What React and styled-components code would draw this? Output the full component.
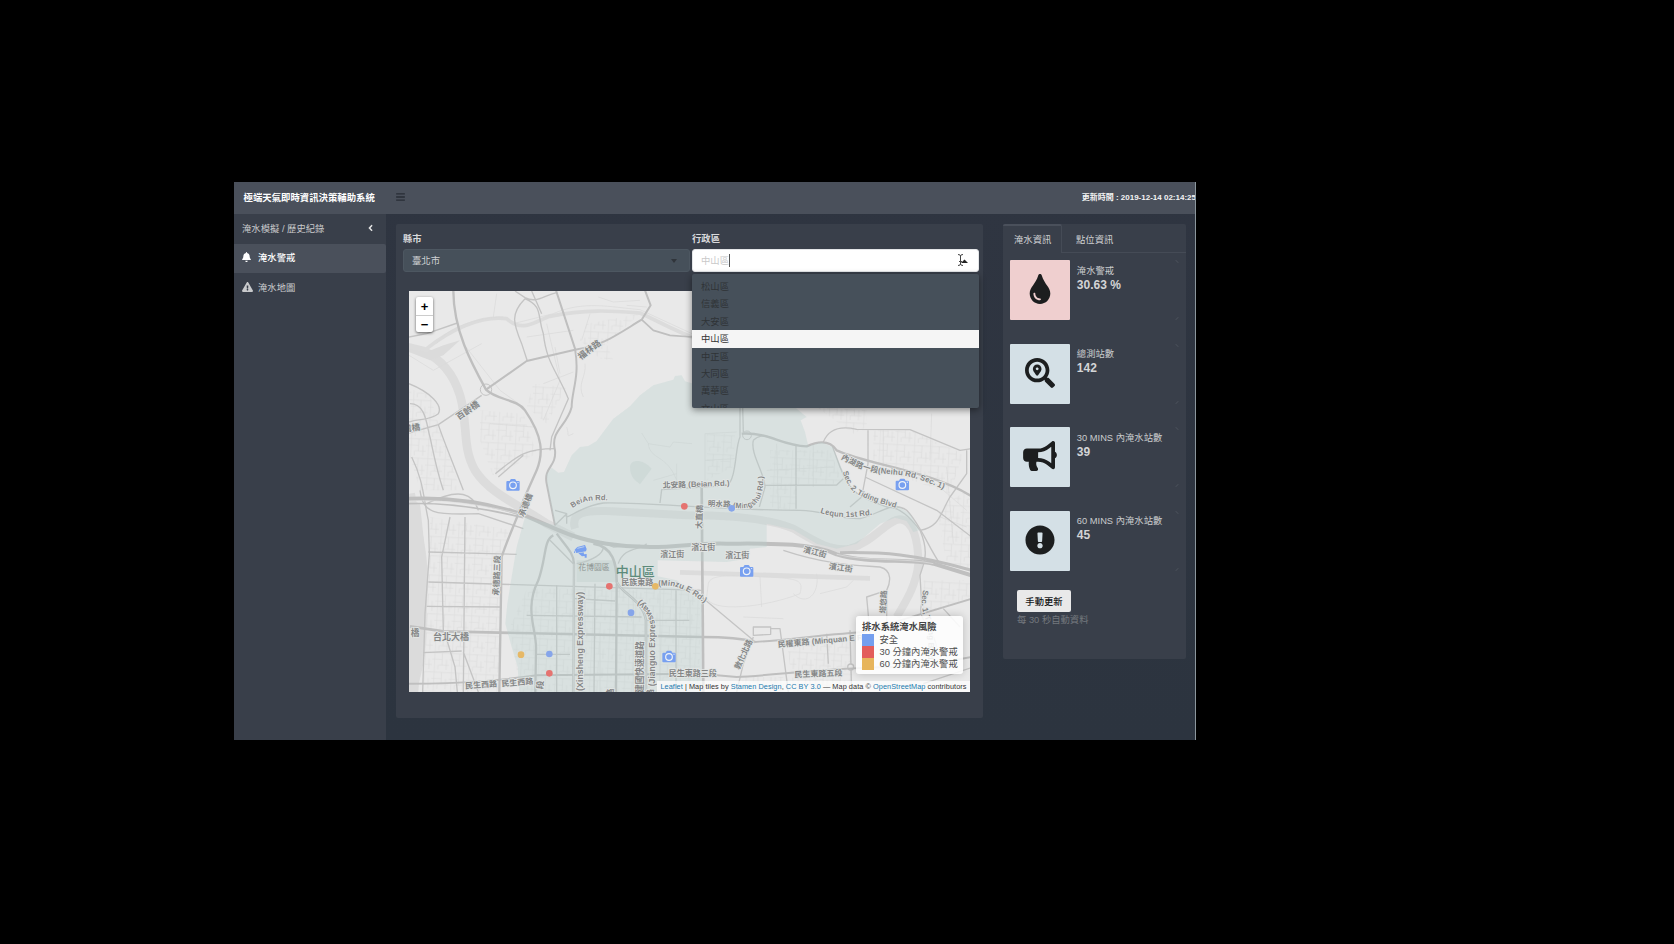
import React from "react";
import styled, { createGlobalStyle, css } from "styled-components";
import {
  FaBars, FaBell, FaExclamationTriangle, FaAngleLeft, FaTint,
  FaSearchLocation, FaBullhorn, FaExclamationCircle,
} from "react-icons/fa";

const GlobalStyle = createGlobalStyle`
  * { box-sizing: border-box; }
  body {
    margin: 0;
    background: #000;
    font-family: "Liberation Sans", "Noto Sans CJK TC", sans-serif;
    font-size: 9.33px;
    color: #d0d2d4;
  }
`;

const Screen = styled.div`
  width: 1674px;
  height: 944px;
  padding: 182px 0 0 234px;
  background: #000;
  overflow: hidden;
`;
const Window = styled.div`
  width: 962px;
  height: 558px;
  display: flex;
  flex-direction: column;
  background: linear-gradient(#2f3541, #2c343f);
  border-right: 1px solid #8b969c;
  overflow: hidden;
`;
const Header = styled.header`
  height: 32px;
  flex: none;
  display: flex;
  align-items: center;
  padding: 0 0 3px 9.5px;
  background: #4a505b;
  white-space: nowrap;
`;
const Brand = styled.div`
  width: 152.5px;
  font-size: 9.4px;
  font-weight: 700;
  color: #fff;
`;
const MenuIcon = styled(FaBars)`
  width: 9px;
  height: 10px;
  color: #282d36;
`;
const Updated = styled.div`
  margin: 0 -1px 0 auto;
  font-size: 8px;
  font-weight: 700;
  color: #f3f3f3;
`;
const Body = styled.div`
  flex: 1;
  display: flex;
  min-height: 0;
`;
const Sidebar = styled.nav`
  width: 152px;
  background: #393f4a;
`;
const NavItem = styled.div`
  height: 29.5px;
  display: flex;
  align-items: center;
  padding: 0 11px 2px 8px;
  color: ${(p) => (p.$active ? "#fff" : "#c9cacc")};
  background: ${(p) => (p.$active ? "#4a505b" : "transparent")};
  font-weight: ${(p) => (p.$active ? 500 : 400)};
  border-radius: 0 2px 2px 0;
  svg { width: ${(p) => p.$icon || 9}px; height: 10px; }
`;
const NavIcon = styled.span`
  width: 16px;
  display: flex;
`;
const Chevron = styled(FaAngleLeft)`
  margin-left: auto;
  color: #e4e4e4;
`;
const Content = styled.main`
  flex: 1;
  display: flex;
  align-items: flex-start;
  gap: 20px;
  padding: 10px 9px 0 10px;
`;
const MapCard = styled.section`
  width: 587px;
  height: 494px;
  padding: 8px 4px 0 7px;
  background: #393f4a;
  border-radius: 2px;
`;
const Filters = styled.div`
  display: flex;
  gap: 2px;
`;
const Field = styled.div`
  position: relative;
  width: 287px;
`;
const Label = styled.label`
  display: block;
  height: 17px;
  line-height: 15px;
  font-weight: 700;
  color: #d9dadc;
`;
const Select = styled.div`
  height: 23px;
  display: flex;
  align-items: center;
  padding: 0 0 1px 8px;
  border-radius: 3px;
  ${(p) => p.$open
    ? css`background: #fff; color: #c9c9c9; border: 1px solid #e4e6e8;`
    : css`background: #46505a; color: #cfd1d3; border: 1px solid #4d5761;`}
`;
const Caret = styled.span`
  margin: 1px 12px 0 auto;
  border: 3px solid transparent;
  border-top: 4px solid #30353b;
  border-bottom: 0;
`;
const TextCaret = styled.span`
  width: 1px;
  height: 13px;
  background: #555;
`;
const PointerIcon = styled.svg`
  width: 12px;
  height: 14px;
  margin: 0 10px 1px auto;
`;
const Menu = styled.div`
  position: absolute;
  z-index: 5;
  top: 42px;
  left: 0;
  width: 287px;
  height: 134px;
  padding-top: 4px;
  background: #46505a;
  border-radius: 2px;
  box-shadow: 0 2px 7px rgba(0, 0, 0, .45);
  overflow: hidden;
`;
const Option = styled.div`
  height: 17.4px;
  line-height: 18px;
  padding-left: 9px;
  color: ${(p) => (p.$active ? "#333" : "#2f3336")};
  background: ${(p) => (p.$active ? "#f5f5f5" : "transparent")};
`;

const MapBox = styled.div`
  position: relative;
  width: 561px;
  height: 401px;
  margin: 19px 0 0 6px;
  overflow: hidden;
  background: #e9e9e9;
`;
const MapSvg = styled.svg`
  display: block;
  width: 100%;
  height: 100%;
`;
const ZoomControl = styled.div`
  position: absolute;
  left: 7px;
  top: 6px;
  width: 17px;
  height: 35px;
  background: #fff;
  border-radius: 2px;
  box-shadow: 0 1px 3px rgba(0, 0, 0, .6);
`;
const ZoomButton = styled.div`
  height: 17.5px;
  display: flex;
  align-items: center;
  justify-content: center;
  padding-top: 1px;
  font-size: 13px;
  font-weight: 700;
  color: #000;
  & + & { border-top: 1px solid #ccc; }
`;
const Legend = styled.div`
  position: absolute;
  right: 7px;
  top: 325px;
  width: 107px;
  height: 58px;
  padding: 5px 0 0 6px;
  color: #4e4e4e;
  background: rgba(255, 255, 255, .86);
  border-radius: 3px;
  box-shadow: 0 0 8px rgba(0, 0, 0, .2);
  white-space: nowrap;
`;
const LegendTitle = styled.div`
  height: 13.3px;
  line-height: 13px;
  font-weight: 700;
  color: #444;
`;
const LegendRow = styled.div`
  height: 12px;
  display: flex;
  align-items: center;
  gap: 5.5px;
  line-height: 11px;
  &::before {
    content: "";
    width: 12px;
    height: 12px;
    background: ${(p) => p.$color};
  }
`;
const Attribution = styled.div`
  position: absolute;
  right: 0;
  bottom: 0;
  height: 11px;
  padding: 0 3.5px;
  line-height: 11px;
  font-size: 7.33px;
  letter-spacing: .055px;
  color: #333;
  background: rgba(255, 255, 255, .7);
  white-space: nowrap;
`;
const Link = styled.span`
  color: #1a79ae;
`;

const InfoPanel = styled.aside`
  width: 183px;
  height: 435px;
  background: #393f4a;
  border-radius: 2px;
`;
const Tabs = styled.div`
  height: 29px;
  display: flex;
`;
const Tab = styled.div`
  height: 29px;
  padding-left: ${(p) => (p.$active ? 11 : 14)}px;
  line-height: ${(p) => (p.$active ? 28 : 32)}px;
  color: #d0d1d3;
  ${(p) => p.$active
    ? css`width: 59px; border-top: 2px solid #4a505b; border-right: 1px solid #454b56; border-radius: 2px 2px 0 0;`
    : css`flex: 1; border-bottom: 1px solid #454b56;`}
`;
const Stats = styled.div`
  display: flex;
  flex-direction: column;
  gap: 23.3px;
  padding: 7px 6px 0 7px;
`;
const Stat = styled.div`
  position: relative;
  height: 60.3px;
  display: flex;
  gap: 6.5px;
  &::before, &::after {
    content: "";
    position: absolute;
    right: 1px;
    width: 4px;
    height: 1px;
    background: #484e58;
  }
  &::before { top: 1px; transform: rotate(45deg); }
  &::after { bottom: 1px; transform: rotate(-45deg); }
`;
const StatIcon = styled.div`
  width: 60.3px;
  display: flex;
  align-items: center;
  justify-content: center;
  padding-bottom: 2px;
  background: ${(p) => p.$color};
  color: #1c1e1f;
  border-radius: 1px;
  svg { width: ${(p) => p.$size || 30}px; height: 30px; }
`;
const StatText = styled.div`
  padding-top: 3.7px;
  white-space: nowrap;
`;
const StatLabel = styled.div`
  height: 14px;
  line-height: 14px;
  color: #c9cbcd;
`;
const StatValue = styled.div`
  height: 16px;
  line-height: 15px;
  font-size: 12px;
  font-weight: 700;
  color: #d3d4d6;
`;
const Refresh = styled.button`
  display: block;
  width: 54px;
  height: 21.5px;
  margin: 19px 0 0 14px;
  padding: 0;
  border: 0;
  border-radius: 2px;
  background: #e9e9e9;
  color: #16181a;
  font: 500 9.33px "Liberation Sans", "Noto Sans CJK TC", sans-serif;
`;
const Hint = styled.div`
  margin-left: 14px;
  line-height: 17px;
  color: #74787e;
`;

const riverPaths = [
  ["M20 200 L70 212 C120 235 160 280 180 345 C205 430 185 500 225 570 C270 640 350 670 440 730 L520 770", 26],
  ["M28 640 C45 740 75 840 65 950 C60 1050 70 1120 30 1235", 34],
  ["M80 205 C150 150 240 105 320 115 C370 160 410 120 450 108 C560 85 640 92 720 98 C780 125 820 150 900 180", 11],
  ["M525 745 C510 695 560 690 620 692 L860 705 C1000 705 1110 715 1180 745 C1240 780 1290 815 1350 805 C1420 785 1460 720 1500 717 C1540 720 1555 780 1555 850 C1550 910 1520 960 1490 1010", 24],
  ["M840 876 L1410 894", 14],
];
const majorPaths = [
  ["M160 30 C160 150 215 250 258 328 C290 360 350 355 375 390 C430 470 430 520 410 570 L370 660 C350 720 320 780 305 830 L298 1235", 7],
  ["M27 655 C150 650 270 670 360 700 C450 735 510 775 620 790 C780 815 870 785 980 790 C1100 790 1230 785 1310 822 C1400 850 1520 835 1600 850 L1715 885", 12],
  ["M27 670 C160 665 280 690 370 712", 5],
  ["M580 790 C640 800 650 850 650 905 C665 940 730 960 738 1020 L738 1235", 8],
  ["M470 760 C500 800 522 820 522 850 L520 1235", 7],
  ["M460 765 C430 780 440 830 415 900 C370 990 412 1050 408 1110 L406 1235", 7],
  ["M650 910 L648 1235", 7],
  ["M905 620 L910 1235", 8],
  ["M468 30 L525 205 C540 290 515 330 515 380 C500 440 450 450 465 510 C470 560 430 560 440 610 L465 735", 6],
  ["M258 328 L380 242 L525 208 C610 195 640 170 725 118 L752 75 L735 30", 6],
  ["M725 118 L760 150 L810 165 L876 170", 5],
  ["M30 1038 L130 1053 L905 1070 C980 1070 1030 1075 1065 1085", 8],
  ["M1025 460 C1110 455 1140 495 1220 498 C1260 480 1290 480 1310 510 C1410 555 1590 570 1715 648", 7],
  ["M1065 1085 C1150 1080 1250 1065 1390 1055 L1500 1020 L1715 955", 6],
  ["M27 1210 C200 1210 300 1200 410 1185 L900 1180 L1010 1190 C1130 1185 1350 1155 1550 1160 L1715 1130", 6],
  ["M1320 817 C1450 815 1540 820 1715 870", 9],
];
const mediumPaths = [
  "M27 170 L80 160 L172 128 M345 32 L375 52 C410 70 430 45 470 37 M375 55 C430 80 410 100 430 160 C440 250 470 270 505 355 L455 470 L450 510 M375 55 C330 100 340 130 365 190 L382 242 M395 32 L425 100",
  "M27 458 L115 433 L245 345 M30 370 C80 370 80 440 90 470 C105 540 110 570 130 630 M27 310 C90 335 130 375 115 400 C90 420 60 415 27 425 M115 433 C130 480 160 550 190 630 M35 530 C70 600 70 650 85 720 L88 820 L75 1000 L68 1235",
  "M286 580 C350 530 370 505 465 505 M295 590 L370 525",
  "M60 630 C70 700 100 705 235 700 L370 745 M80 670 C180 620 220 640 235 690 M150 710 L125 830 L130 1050 M195 710 L190 1235 M85 815 L350 822 M85 905 L905 930 M80 978 L300 980 M70 1117 L185 1112 M190 1115 L235 1235 M135 1060 L165 1160 L172 1235",
  "M525 955 L645 962 M380 1005 L725 1010 M408 1122 L510 1122 M470 915 L470 1235 M585 910 L582 1235 M828 930 L828 1235 M740 1020 L868 1020",
  "M465 735 L500 700 C490 730 530 680 610 668 C750 665 950 690 1200 690 C1270 690 1300 715 1380 715 C1440 700 1480 660 1520 690 C1560 730 1590 810 1620 850 M500 730 L500 700 L465 690",
  "M780 668 L785 628 L980 616 C1010 600 1005 500 1020 470 L1020 380 M1060 480 C1050 520 1095 580 1095 620 L1078 680 M1188 495 L1188 685 M1095 615 L1310 614 L1330 595 M1030 455 L1028 380 M1060 480 C1075 465 1090 465 1110 470",
  "M1298 500 L1320 560 C1350 640 1380 650 1460 680 C1500 680 1530 710 1560 750 C1620 740 1620 700 1650 650 L1700 580 L1700 510 M1270 485 C1290 435 1340 440 1370 447 L1530 448 L1680 510 L1715 505 M1404 450 L1404 550 L1385 650 L1350 680 M1395 590 L1610 690 L1715 770 M1560 750 C1590 820 1570 850 1560 885 L1565 970 C1550 1020 1600 1040 1610 1100",
  "M905 950 L1060 1080 M1060 1040 L1060 1065 L1112 1062 L1112 1040 Z M1112 1045 L1140 1045 L1165 1235 M1060 1070 L1030 1150 L1010 1235 M1350 1050 L1355 1235 M1280 1060 L1285 1150",
  "M1150 810 C1300 860 1400 855 1440 860 C1480 870 1470 910 1460 930 L1400 950 L1410 1060 M1460 930 L1460 1040 M1630 985 L1680 1040 M1720 1160 L1570 1210",
  "M450 780 L500 830 L520 850 M530 850 C580 840 610 820 610 800 M655 850 C670 800 720 810 740 790 M590 780 L640 800 L720 795",
];
const minorPaths = [
  "M27 225 L100 270 L245 190 M190 190 L300 330 L370 380 M290 40 L280 110 M110 190 C140 140 240 110 310 110 M380 170 L520 150 M340 130 L460 100 C550 60 630 80 720 88 L876 160 M440 130 L480 300 L430 420 M570 100 L545 180 M595 50 L640 65 L720 60 M680 75 L740 80 M555 250 C560 290 530 310 550 350 M430 310 L520 275 M465 200 L480 280 M270 430 L400 440 M500 440 C510 470 495 470 520 460",
  "M725 458 L745 490 L810 500 L820 485 L876 490 M745 490 C750 540 800 520 830 600 L830 550 M760 600 L830 580 M600 1060 L600 1235 M555 920 L555 1060 M700 930 L700 1235 M780 930 L780 1235 M870 960 L870 1235",
  "M925 910 C930 880 1000 885 1100 890 C1200 895 1210 900 1200 940 C1100 980 930 1000 920 950 Z M1080 890 L1085 980 M1180 940 C1220 980 1260 940 1250 880 M1260 940 L1340 920 L1360 900 M1030 1010 L1150 1015",
  "M1100 570 L1300 560 M1130 490 L1135 690 M1240 490 L1240 620 M915 460 L1010 455 M915 540 L1005 535 M915 460 L915 600 M1450 450 L1450 570 M1595 400 L1590 540 M1640 560 L1660 790 M1595 600 L1700 690 M1620 710 L1700 740",
];
const gridAreas = [
  "27,325 90,345 115,430 180,630 60,630 27,520", "240,390 370,400 410,520 280,590 240,480",
  "90,710 340,750 300,830 300,1235 70,1235 85,900", "380,925 900,925 900,1235 360,1235 330,1040",
  "560,130 720,100 620,190 640,240 600,235 540,180", "400,310 500,320 440,430 380,380",
  "1110,510 1290,510 1330,610 1190,610 1190,690 1110,680", "920,460 1005,460 1000,560 920,600",
  "1420,450 1530,450 1690,520 1650,640 1420,560", "1610,690 1715,620 1715,870 1640,850",
  "1160,1080 1350,1070 1360,1235 1180,1235", "1030,1190 1150,1190 1150,1235 1020,1235",
  "1570,900 1715,900 1715,950 1570,1000", "1360,460 1250,380 1400,390 1400,440",
];
const labels = [
  ["福林路", 568, 208, -37], ["百齡橋", 203, 390, -35], ["灣橋", 35, 443, -8], ["橋", 45, 1057, 0],
  ["台北大橋", 153, 1069, 0, 27], ["承德橋", 377, 674, -68, 24], ["承德路三段", 290, 885, -88, 24],
  ["北安路 (Beian Rd.)", 888, 611, -2, 23.5], ["大直橋", 898, 710, -88, 24],
  ["濱江街", 910, 800, 0, 24], ["濱江街", 817, 821, 0, 24], ["濱江街", 1012, 825, 0, 24],
  ["濱江街", 1245, 815, 15, 24], ["濱江街", 1322, 862, 8, 24], ["民族東路", 712, 906, 0, 24],
  ["(Xinsheng Expressway)", 539, 1083, -90, 26.5], ["建國快速道路", 719, 1160, -90, 26],
  ["段", 420, 1214, -85], ["路", 632, 1236, -90, 23], ["路", 752, 1238, -90, 23],
  ["民生西路", 243, 1213, -4, 24], ["民生西路", 352, 1206, -5, 24],
  ["民生東路三段", 878, 1177, 0, 24], ["民生東路五段", 1255, 1180, -2, 24],
  ["民權東路 (Minquan E Rd.)", 1275, 1080, -5, 24], ["塔悠路", 1450, 965, -87, 23],
  ["敦化北路", 1030, 1122, -65, 24],
];
const curvedLabels = [
  ["BeiAn Rd.", "M518 683 C545 662 580 655 640 662", 23],
  ["明水路 (Mingshui Rd.)", "M923 678 L990 680 C1090 700 1094 640 1088 540", 23],
  ["內湖路一段(Neihu Rd. Sec. 1)", "M1322 535 C1400 580 1430 578 1500 584 C1560 592 1600 615 1670 643", 24],
  ["Sec. 2, Tiding Blvd", "M1328 575 C1345 630 1365 640 1400 655 C1430 665 1465 677 1530 694", 23],
  ["Lequn 1st Rd.", "M1260 697 C1310 714 1350 714 1440 700", 24],
  ["(Minzu E Rd.)", "M775 917 C830 912 860 925 930 982", 24],
  ["(Jianguo Expressway)", "M766 1218 L766 1040 C760 990 735 965 690 940", 26],
  ["Sec. 1, Tiding Blvd", "M1570 928 C1562 960 1564 990 1580 1025 C1590 1060 1585 1090 1582 1190", 24],
];
const dots = [
  [853, 678, "#e57370"], [995, 684, "#86a5ea"], [628, 918, "#e57370"], [766, 918, "#e6b866"],
  [693, 997, "#86a5ea"], [363, 1123, "#e6b866"], [448, 1121, "#86a5ea"], [448, 1179, "#e57370"],
];
const cameras = [[339, 614], [807, 1129], [1507, 613], [1040, 872]];

function Camera({ x, y }) {
  return (
    <g transform={`translate(${x - 20} ${y - 18})`}>
      <path fill="#78a0f0" d="M3 6H10L13 1Q14 0 15 0H25Q26 0 27 1L30 6H37Q40 6 40 9V32Q40 35 37 35H3Q0 35 0 32V9Q0 6 3 6Z" />
      <circle cx="20" cy="19" r="10" fill="none" stroke="#f0f3f7" strokeWidth="3.5" />
      <circle cx="35" cy="10.5" r="1.8" fill="#f0f3f7" />
    </g>
  );
}

function CityMap() {
  return (
    <MapSvg viewBox="27 32 1683 1203" preserveAspectRatio="none">
      <defs>
        <pattern id="streets" width="52" height="58" patternUnits="userSpaceOnUse" patternTransform="rotate(3)">
          <path d="M0 8H52M0 27H30M20 44H52M8 0V58M30 8V44M43 27V58M18 44V58" fill="none" stroke="#dcdcdc" strokeWidth="1.8" />
        </pattern>
      </defs>
      <rect x="27" y="32" width="1683" height="1203" fill="#e9e9e9" />
      <g fill="none" stroke="#dcdcdc" strokeLinejoin="round">
        {riverPaths.map(([d, w]) => <path key={d} d={d} strokeWidth={w} />)}
      </g>
      <path d="M27 205 L80 215 L130 195 L180 180 L130 225 L90 240 L27 215Z M27 655 L60 670 L80 860 L70 1030 L55 1235 H27Z" fill="#dbdbdb" />
      <path d="M690 560 C690 535 730 535 755 565 L720 612 C705 600 690 590 690 560Z M530 840 H645 V905 H530Z" fill="#dbdfde" />
      <g fill="url(#streets)">
        {gridAreas.map((p) => <polygon key={p} points={p} />)}
      </g>
      <g fill="none" stroke="#dadada" strokeWidth="2">
        {minorPaths.map((d) => <path key={d} d={d} />)}
      </g>
      <g fill="none" stroke="#c4c4c4" strokeWidth="4" strokeLinejoin="round">
        {mediumPaths.map((d) => <path key={d} d={d} />)}
        <circle cx="1041" cy="465" r="13" strokeWidth="3" />
        <circle cx="258" cy="328" r="17" strokeWidth="3" />
        <circle cx="1352" cy="1160" r="9" fill="#e9e9e9" />
      </g>
      <g fill="none" stroke="#bfbfbf" strokeLinejoin="round">
        {majorPaths.map(([d, w]) => <path key={d} d={d} strokeWidth={w} />)}
      </g>
      <path d="M27 662 C160 657 280 680 370 704 M738 1235 V1020 C730 960 665 940 651 905 M522 850 L520 1235 M1310 822 C1400 844 1520 832 1600 850" fill="none" stroke="#e1e1e1" strokeWidth="2" />
      <path
        fill="#b8d1cc" fillOpacity=".32"
        d="M880 310 L855 303 L845 285 L825 287 L820 298 L760 315 L720 345 L690 378 L640 415 L610 455 L590 482 L565 497 L540 500 L515 525 L492 575 L475 577 L455 562 L440 582 L442 610 L465 735 L375 710 L350 800 L335 890 L322 970 L316 1030 L335 1100 L353 1160 L358 1235 H905 V960 L870 928 L830 900 L773 888 V840 L980 845 L1040 835 L1050 805 L1100 800 V730 L1180 748 L1250 790 L1310 805 L1370 790 L1440 730 L1485 712 L1520 722 L1540 755 L1558 750 L1530 700 L1480 668 L1430 662 L1380 650 L1345 610 L1315 540 L1298 500 L1265 486 L1225 498 L1215 455 L1202 420 L1220 410 L1190 385 L1100 300Z"
      />
      <g fill="#858686" stroke="#e4e7e6" strokeWidth="5" strokeLinejoin="round" paintOrder="stroke" fontWeight="700" textAnchor="middle">
        {labels.map(([t, x, y, r, s = 26], i) => (
          <text key={i} fontSize={s} transform={`translate(${x} ${y}) rotate(${r})`} dy=".36em">{t}</text>
        ))}
      </g>
      <g fill="#858686" stroke="#e4e7e6" strokeWidth="5" strokeLinejoin="round" paintOrder="stroke" fontWeight="700">
        {curvedLabels.map(([t, d, s], i) => (
          <React.Fragment key={i}>
            <path id={`road${i}`} d={d} fill="none" stroke="none" />
            <text fontSize={s}><textPath href={`#road${i}`}>{t}</textPath></text>
          </React.Fragment>
        ))}
      </g>
      <text x="582" y="868" fontSize="23.5" textAnchor="middle" fill="#8d9492">花博園區</text>
      <text x="706" y="887" fontSize="39" fontWeight="500" textAnchor="middle" fill="#5d8b7b">中山區</text>
      {dots.map(([x, y, c]) => <circle key={`${x}-${y}`} cx={x} cy={y} r="10" fill={c} />)}
      {cameras.map(([x, y]) => <Camera key={x} x={x} y={y} />)}
      <g fill="#78a0f0" transform="translate(522 794)">
        <path d="M10 6 L33 0 L38 12 L36 19 L7 24 L2 14Z M0 16 L4 23 L0 24Z M13 25 L29 22 L30 28 L38 27 V38 H32 V33 L24 34Z" />
        <path d="M10 10 L31 5" stroke="#dce5ee" strokeWidth="2" />
      </g>
    </MapSvg>
  );
}

const districts = ["松山區", "信義區", "大安區", "中山區", "中正區", "大同區", "萬華區", "文山區"];
const stats = [
  { label: "淹水警戒", value: "30.63 %", icon: <FaTint />, color: "#efcfcf" },
  { label: "總測站數", value: "142", icon: <FaSearchLocation />, color: "#d4e0e6" },
  { label: "30 MINS 內淹水站數", value: "39", icon: <FaBullhorn />, color: "#d4e0e6", size: 34 },
  { label: "60 MINS 內淹水站數", value: "45", icon: <FaExclamationCircle />, color: "#d4e0e6" },
];

export default function App() {
  return (
    <Screen>
      <GlobalStyle />
      <Window>
        <Header>
          <Brand>極端天氣即時資訊決策輔助系統</Brand>
          <MenuIcon />
          <Updated>更新時間 : 2019-12-14 02:14:25</Updated>
        </Header>
        <Body>
          <Sidebar>
            <NavItem>淹水模擬 / 歷史紀錄<Chevron /></NavItem>
            <NavItem $active><NavIcon><FaBell /></NavIcon>淹水警戒</NavItem>
            <NavItem $icon={11}><NavIcon><FaExclamationTriangle /></NavIcon>淹水地圖</NavItem>
          </Sidebar>
          <Content>
            <MapCard>
              <Filters>
                <Field>
                  <Label>縣市</Label>
                  <Select>臺北市<Caret /></Select>
                </Field>
                <Field>
                  <Label>行政區</Label>
                  <Select $open>
                    中山區<TextCaret />
                    <PointerIcon viewBox="0 0 12 14">
                      <path d="M2 1.5Q4.500 1.500 4.500 3Q4.500 1.500 7 1.500M4.500 3V11M2 12.500Q4.500 12.500 4.500 11Q4.500 12.500 7 12.500M3 8.500H6" fill="none" stroke="#444" />
                      <path d="M5 10L8.500 6.500L12 10Z" fill="#222" />
                    </PointerIcon>
                  </Select>
                  <Menu>
                    {districts.map((d) => <Option key={d} $active={d === "中山區"}>{d}</Option>)}
                  </Menu>
                </Field>
              </Filters>
              <MapBox>
                <CityMap />
                <ZoomControl><ZoomButton>+</ZoomButton><ZoomButton>−</ZoomButton></ZoomControl>
                <Legend>
                  <LegendTitle>排水系統淹水風險</LegendTitle>
                  <LegendRow $color="#749fef">安全</LegendRow>
                  <LegendRow $color="#e35d5b">30 分鐘內淹水警戒</LegendRow>
                  <LegendRow $color="#e7b55c">60 分鐘內淹水警戒</LegendRow>
                </Legend>
                <Attribution>
                  <Link>Leaflet</Link> | Map tiles by <Link>Stamen Design</Link>, <Link>CC BY 3.0</Link> — Map data © <Link>OpenStreetMap</Link> contributors
                </Attribution>
              </MapBox>
            </MapCard>
            <InfoPanel>
              <Tabs><Tab $active>淹水資訊</Tab><Tab>點位資訊</Tab></Tabs>
              <Stats>
                {stats.map((s) => (
                  <Stat key={s.label}>
                    <StatIcon $color={s.color} $size={s.size}>{s.icon}</StatIcon>
                    <StatText>
                      <StatLabel>{s.label}</StatLabel>
                      <StatValue>{s.value}</StatValue>
                    </StatText>
                  </Stat>
                ))}
              </Stats>
              <Refresh>手動更新</Refresh>
              <Hint>每 30 秒自動資料</Hint>
            </InfoPanel>
          </Content>
        </Body>
      </Window>
    </Screen>
  );
}
